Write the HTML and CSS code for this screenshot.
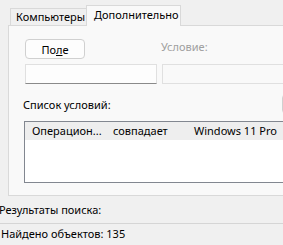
FILE: index.html
```html
<!DOCTYPE html>
<html lang="ru">
<head>
<meta charset="utf-8">
<link rel="stylesheet" href="styles.css">
</head>
<body>
<div class="window">
  <div class="tabs">
    <div class="tab">Компьютеры</div>
    <div class="tab active">Дополнительно</div>
  </div>
  <div class="panel">
    <div class="grid">
      <button class="btn">По<u>л</u>е</button>
      <div class="cond-label">Условие:</div>
      <div class="field"></div>
      <div class="field disabled"></div>
    </div>
    <div class="list-head">
      <div class="list-label">Список условий:</div>
      <div class="side-btn"></div>
    </div>
    <div class="listbox">
      <div class="lrow">
        <span class="c1">Операцион...</span>
        <span class="c2">совпадает</span>
        <span class="c3">Windows 11 Pro</span>
      </div>
    </div>
  </div>
  <div class="results">Результаты поиска:</div>
  <div class="status">Найдено объектов: 135</div>
</div>
</body>
</html>
```
FILE: styles.css
```css
html, body {
  margin: 0;
  padding: 0;
  background: #f0f0f0;
  overflow: hidden;
}
body {
  width: 283px;
  height: 245px;
  font-family: "Segoe UI", "Noto Sans", sans-serif;
  font-size: 11px;
  color: #000;
}
.window {
  width: 283px;
  height: 245px;
  overflow: hidden;
}
.tabs {
  display: flex;
  align-items: flex-end;
  height: 25px;
  padding-left: 10px;
  box-sizing: border-box;
}
.tab {
  flex-shrink: 0;
  height: 17px;
  box-sizing: border-box;
  border: 1px solid #d9d9d9;
  border-bottom: none;
  background: #f0f0f0;
  padding: 0 0 0 5px;
  line-height: 16px;
  width: 77px;
  white-space: nowrap;
}
.tab.active {
  width: 95px;
  margin-left: -1px;
  background: #f9f9f9;
  position: relative;
  top: 1px;
  height: 21px;
  line-height: 18px;
  padding-left: 7px;
}
.panel {
  margin-left: 8px;
  width: 400px;
  height: 171px;
  box-sizing: border-box;
  border: 1px solid #d9d9d9;
  background: #f9f9f9;
  padding: 13px 0 0 16px;
}
.grid {
  display: grid;
  grid-template-columns: 137px 200px;
  grid-template-rows: 20px 20px;
  row-gap: 5px;
}
.btn {
  width: 60px;
  height: 20px;
  box-sizing: border-box;
  border: 1px solid #d0d0d0;
  border-radius: 4px;
  background: #fdfdfd;
  font: inherit;
  color: #000;
  padding: 0;
  line-height: 17px;
}
.cond-label {
  color: #a0a0a0;
  align-self: end;
  line-height: 14px;
  margin-left: -1px;
  position: relative;
  top: -5px;
}
.field {
  width: 132px;
  box-sizing: border-box;
  border: 1px solid #e0e0e0;
  border-bottom: 1px solid #8a8a8a;
  background: #fdfdfd;
}
.field.disabled {
  width: 200px;
  border-bottom-color: #e0e0e0;
  background: #f9f9f9;
}
.list-head {
  display: flex;
  margin-top: 10px;
  height: 27px;
}
.list-label {
  flex-shrink: 0;
  width: 259px;
  margin-left: -2px;
  line-height: 16px;
  padding-top: 3px;
}
.side-btn {
  flex-shrink: 0;
  width: 60px;
  height: 20px;
  box-sizing: border-box;
  border: 1px solid #d0d0d0;
  border-radius: 4px;
  background: #fdfdfd;
}
.listbox {
  margin-left: -1px;
  width: 320px;
  height: 62px;
  box-sizing: border-box;
  border: 1px solid #828790;
  background: #fff;
}
.lrow {
  display: flex;
  height: 18px;
  background: #eeeeee;
  line-height: 17px;
  white-space: nowrap;
}
.c1 { flex-shrink: 0; width: 88px; padding-left: 7px; box-sizing: border-box; }
.c2 { flex-shrink: 0; width: 81px; }
.c3 { flex-shrink: 0; width: 120px; }
.results {
  height: 27px;
  line-height: 27px;
  margin-left: -1px;
  border-bottom: 1px solid #d5d5d5;
}
.status {
  line-height: 20px;
  padding-left: 1px;
}
```
